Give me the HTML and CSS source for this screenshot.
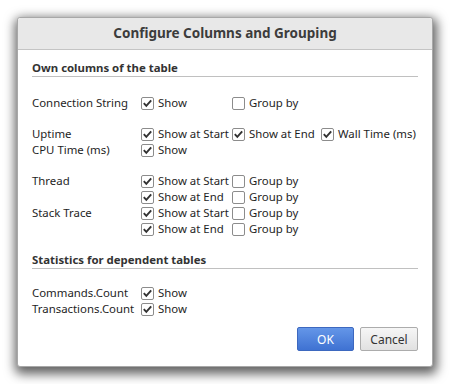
FILE: index.html
```html
<!DOCTYPE html>
<html lang="en">
<head>
  <meta charset="UTF-8" />
  <title>Configure Columns and Grouping</title>
  <link rel="stylesheet" href="styles.css">
</head>
<body>
  <div class="dialog">
    <div class="dialog-title">Configure Columns and Grouping</div>

    <div class="dialog-body">
      <div class="section-title">Own columns of the table</div>

      <div class="group first">
        <div class="name">Connection String</div>
        <label class="opt"><span class="box on"></span>Show</label>
        <label class="opt"><span class="box"></span>Group by</label>
      </div>

      <div class="group">
        <div class="name">Uptime</div>
        <label class="opt"><span class="box on"></span>Show at Start</label>
        <label class="opt"><span class="box on"></span>Show at End</label>
        <label class="opt"><span class="box on"></span>Wall Time (ms)</label>
        <div class="name">CPU Time (ms)</div>
        <label class="opt"><span class="box on"></span>Show</label>
      </div>

      <div class="group">
        <div class="name">Thread</div>
        <label class="opt"><span class="box on"></span>Show at Start</label>
        <label class="opt"><span class="box"></span>Group by</label>
        <div class="name"></div>
        <label class="opt"><span class="box on"></span>Show at End</label>
        <label class="opt"><span class="box"></span>Group by</label>
        <div class="name">Stack Trace</div>
        <label class="opt"><span class="box on"></span>Show at Start</label>
        <label class="opt"><span class="box"></span>Group by</label>
        <div class="name"></div>
        <label class="opt"><span class="box on"></span>Show at End</label>
        <label class="opt"><span class="box"></span>Group by</label>
      </div>

      <div class="section-title">Statistics for dependent tables</div>

      <div class="group stats">
        <div class="name">Commands.Count</div>
        <label class="opt"><span class="box on"></span>Show</label>
        <div class="name">Transactions.Count</div>
        <label class="opt"><span class="box on"></span>Show</label>
      </div>
    </div>

    <div class="dialog-buttons">
      <button class="btn btn-ok">OK</button>
      <button class="btn">Cancel</button>
    </div>
  </div>
</body>
</html>
```

FILE: styles.css
```css
html, body {
  margin: 0;
  padding: 0;
  background: #fff;
  font-family: 'Noto Sans', 'Open Sans', sans-serif;
  font-size: 11.4px;
  color: #1e1e1e;
}

.dialog {
  margin: 17px;
  width: 416px;
  height: 350px;
  box-sizing: border-box;
  border: 1px solid #a8a8a8;
  border-radius: 3px;
  background: #fff;
  box-shadow: 1px 4px 11px 3px rgba(0, 0, 0, 0.62);
  display: flex;
  flex-direction: column;
}

.dialog-title {
  height: 31px;
  line-height: 31px;
  text-align: center;
  background: #e8e8e8;
  border-bottom: 1px solid #c4c4c4;
  border-radius: 3px 3px 0 0;
  font-size: 13.5px;
  font-weight: bold;
  color: #3c3c3c;
}

.dialog-body {
  flex: 1;
  padding: 0 14px;
}

.section-title {
  margin-top: 10px;
  line-height: 16px;
  font-weight: bold;
  color: #333;
  border-bottom: 1px solid #c0c0c0;
}

.group {
  display: grid;
  grid-template-columns: 109px 91px 89px auto;
  grid-auto-rows: 16px;
  margin-top: 15px;
}

.group.first {
  margin-top: 18px;
}

.group.stats {
  margin-top: 16px;
}

.group + .section-title {
  margin-top: 15px;
}

.name {
  grid-column: 1;
  line-height: 16px;
  white-space: nowrap;
}

.opt {
  display: flex;
  align-items: flex-start;
  line-height: 16px;
  white-space: nowrap;
}

.box {
  width: 13px;
  height: 13px;
  box-sizing: border-box;
  margin: 2px 4px 0 0;
  border: 1px solid #8c8c8c;
  border-radius: 2px;
  background: #fff;
  flex: none;
}

.box.on {
  background: #fff url("data:image/svg+xml,%3Csvg xmlns='http://www.w3.org/2000/svg' viewBox='0 0 11 11'%3E%3Cpath d='M1.8 5.2 L4.3 7.9 L9.2 2.4' fill='none' stroke='%23333' stroke-width='1.9'/%3E%3C/svg%3E") center/11px 11px no-repeat;
}

.dialog-buttons {
  display: flex;
  justify-content: flex-end;
  gap: 6px;
  padding: 0 14px 15px;
}

.btn {
  height: 24px;
  width: 58px;
  padding: 0;
  font-family: inherit;
  font-size: 12px;
  color: #333;
  border: 1px solid #acacac;
  border-radius: 2px;
  background: linear-gradient(#f6f6f6, #e1e1e1);
}

.btn-ok {
  width: 57px;
  color: #fff;
  border-color: #3d68bf;
  background: linear-gradient(#6496e8, #3f72d2);
}
```
